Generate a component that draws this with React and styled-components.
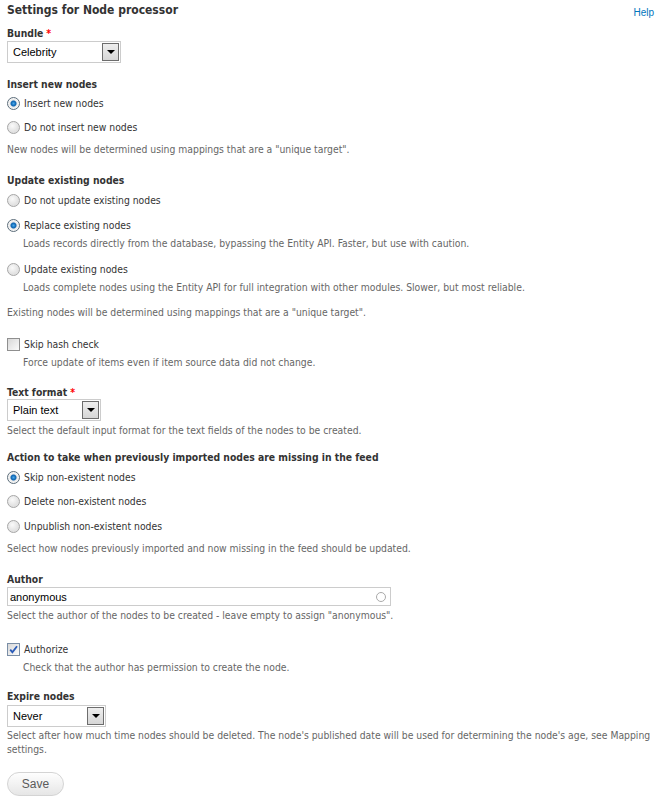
import React from "react";
import styled, { createGlobalStyle } from "styled-components";

const GlobalStyle = createGlobalStyle`
  html, body {
    margin: 0;
    padding: 0;
    background: #fff;
  }
  body {
    font-family: "DejaVu Sans Condensed", "DejaVu Sans", sans-serif;
    font-size: 10.3px;
    color: #333;
  }
`;

const Page = styled.div`
  width: 660px;
  padding: 1px 7px 0;
  box-sizing: border-box;
`;

const Header = styled.div`
  display: flex;
  justify-content: space-between;
  align-items: flex-start;
  height: 19px;
`;

const Title = styled.h2`
  margin: 0;
  font-size: 12px;
  line-height: 19px;
  font-weight: bold;
  color: #333;
`;

const HelpLink = styled.a`
  margin-top: 5px;
  margin-right: -1px;
  font-family: "Liberation Sans", Arial, sans-serif;
  font-size: 10px;
  line-height: 14px;
  color: #0074bd;
  text-decoration: none;
`;

const Form = styled.form`
  display: flex;
  flex-direction: column;
  align-items: flex-start;
`;

const Label = styled.div`
  margin-top: ${(p) => p.$mt || 0}px;
  font-weight: bold;
  line-height: 14px;
  color: #333;
`;

const Required = styled.span`
  color: #f00;
  margin-left: 3px;
`;

const Description = styled.div`
  margin-top: ${(p) => p.$mt || 0}px;
  margin-left: ${(p) => (p.$indent ? 16 : 0)}px;
  line-height: 14px;
  color: #666;
  max-width: 646px;
`;

const Option = styled.label`
  display: flex;
  align-items: center;
  height: 16px;
  margin-top: ${(p) => p.$mt || 0}px;
  line-height: 14px;
  color: #333;
`;

const RadioDot = styled.span`
  width: 11px;
  height: 11px;
  border-radius: 50%;
  border: 1px solid ${(p) => (p.$checked ? "#5c6d7a" : "#a6a6a6")};
  background: ${(p) =>
    p.$checked
      ? "radial-gradient(circle at 50% 50%, #4aa8e8 0, #0b62b0 2.5px, #e9e9e9 3.5px, #fdfdfd 6px)"
      : "radial-gradient(circle at 40% 35%, #fafafa 0, #e2e2e2 6px)"};
  margin-right: 4px;
  flex-shrink: 0;
`;

const CheckBox = styled.span`
  width: 11px;
  height: 11px;
  border: 1px solid ${(p) => (p.$checked ? "#7a8ea6" : "#8f8f8f")};
  background: linear-gradient(135deg, #d8d8d8, #fbfbfb);
  margin-right: 4px;
  flex-shrink: 0;
  display: flex;
  align-items: center;
  justify-content: center;
`;

const SelectBox = styled.div`
  margin-top: ${(p) => p.$mt || 0}px;
  width: ${(p) => p.$width}px;
  height: 22px;
  box-sizing: border-box;
  border: 1px solid #ccc;
  display: flex;
  align-items: center;
  justify-content: space-between;
  font-family: "Liberation Sans", Arial, sans-serif;
  font-size: 11px;
  color: #000;
  padding-left: 5px;
  padding-right: 1px;
  background: #fff;
`;

const SelectArrow = styled.span`
  width: 15px;
  height: 16px;
  border: 1px solid #6d6d6d;
  background: linear-gradient(#eee, #d6d6d6);
  display: flex;
  align-items: center;
  justify-content: center;
  &::after {
    content: "";
    border-left: 4px solid transparent;
    border-right: 4px solid transparent;
    border-top: 4px solid #000;
  }
`;

const TextInput = styled.div`
  margin-top: ${(p) => p.$mt || 0}px;
  width: 384px;
  height: 19px;
  box-sizing: border-box;
  border: 1px solid #ccc;
  display: flex;
  align-items: center;
  justify-content: space-between;
  padding: 0 4px 0 2px;
  font-family: "Liberation Sans", Arial, sans-serif;
  font-size: 11px;
  color: #000;
`;

const Throbber = styled.span`
  width: 8px;
  height: 8px;
  border-radius: 50%;
  border: 1px solid #aaa;
`;

const SaveButton = styled.button`
  margin-top: ${(p) => p.$mt || 0}px;
  width: 57px;
  height: 24px;
  border: 1px solid #d4d4d4;
  border-radius: 12px;
  background: linear-gradient(#fefefe, #e6e6e6);
  font-family: "Liberation Sans", Arial, sans-serif;
  font-size: 12px;
  color: #5a5a5a;
  padding: 0;
`;

function Radio({ checked, label, mt }) {
  return (
    <Option $mt={mt}>
      <RadioDot $checked={checked} />
      {label}
    </Option>
  );
}

function Check({ checked, label, mt }) {
  return (
    <Option $mt={mt}>
      <CheckBox $checked={checked}>
        {checked && (
          <svg width="9" height="9" viewBox="0 0 9 9">
            <path d="M1.2 4.6 L3.4 7.2 L8 1.2" fill="none" stroke="#2a5bb8" strokeWidth="1.8" />
          </svg>
        )}
      </CheckBox>
      {label}
    </Option>
  );
}

function Select({ value, width, mt }) {
  return (
    <SelectBox $width={width} $mt={mt}>
      {value}
      <SelectArrow />
    </SelectBox>
  );
}

export default function App() {
  return (
    <Page>
      <GlobalStyle />
      <Header>
        <Title>Settings for Node processor</Title>
        <HelpLink href="#">Help</HelpLink>
      </Header>
      <Form onSubmit={(e) => e.preventDefault()}>
        <Label $mt={6}>
          Bundle<Required>*</Required>
        </Label>
        <Select value="Celebrity" width={114} mt={1} />

        <Label $mt={14}>Insert new nodes</Label>
        <Radio checked label="Insert new nodes" mt={4} />
        <Radio label="Do not insert new nodes" mt={8} />
        <Description $mt={7}>New nodes will be determined using mappings that are a "unique target".</Description>

        <Label $mt={17}>Update existing nodes</Label>
        <Radio label="Do not update existing nodes" mt={5} />
        <Radio checked label="Replace existing nodes" mt={9} />
        <Description $indent $mt={3}>
          Loads records directly from the database, bypassing the Entity API. Faster, but use with caution.
        </Description>
        <Radio label="Update existing nodes" mt={11} />
        <Description $indent $mt={3}>
          Loads complete nodes using the Entity API for full integration with other modules. Slower, but most reliable.
        </Description>
        <Description $mt={11}>Existing nodes will be determined using mappings that are a "unique target".</Description>

        <Check label="Skip hash check" mt={17} />
        <Description $indent $mt={3}>Force update of items even if item source data did not change.</Description>

        <Label $mt={16}>
          Text format<Required>*</Required>
        </Label>
        <Select value="Plain text" width={94} mt={0} />
        <Description $mt={2}>Select the default input format for the text fields of the nodes to be created.</Description>

        <Label $mt={13}>Action to take when previously imported nodes are missing in the feed</Label>
        <Radio checked label="Skip non-existent nodes" mt={5} />
        <Radio label="Delete non-existent nodes" mt={8} />
        <Radio label="Unpublish non-existent nodes" mt={9} />
        <Description $mt={7}>Select how nodes previously imported and now missing in the feed should be updated.</Description>

        <Label $mt={17}>Author</Label>
        <TextInput $mt={1}>
          anonymous
          <Throbber />
        </TextInput>
        <Description $mt={2}>
          Select the author of the nodes to be created - leave empty to assign "anonymous".
        </Description>

        <Check checked label="Authorize" mt={19} />
        <Description $indent $mt={3}>Check that the author has permission to create the node.</Description>

        <Label $mt={15}>Expire nodes</Label>
        <Select value="Never" width={99} mt={2} />
        <Description $mt={1}>
          Select after how much time nodes should be deleted. The node's published date will be used for determining the node's age, see Mapping settings.
        </Description>

        <SaveButton type="submit" $mt={16}>Save</SaveButton>
      </Form>
    </Page>
  );
}
